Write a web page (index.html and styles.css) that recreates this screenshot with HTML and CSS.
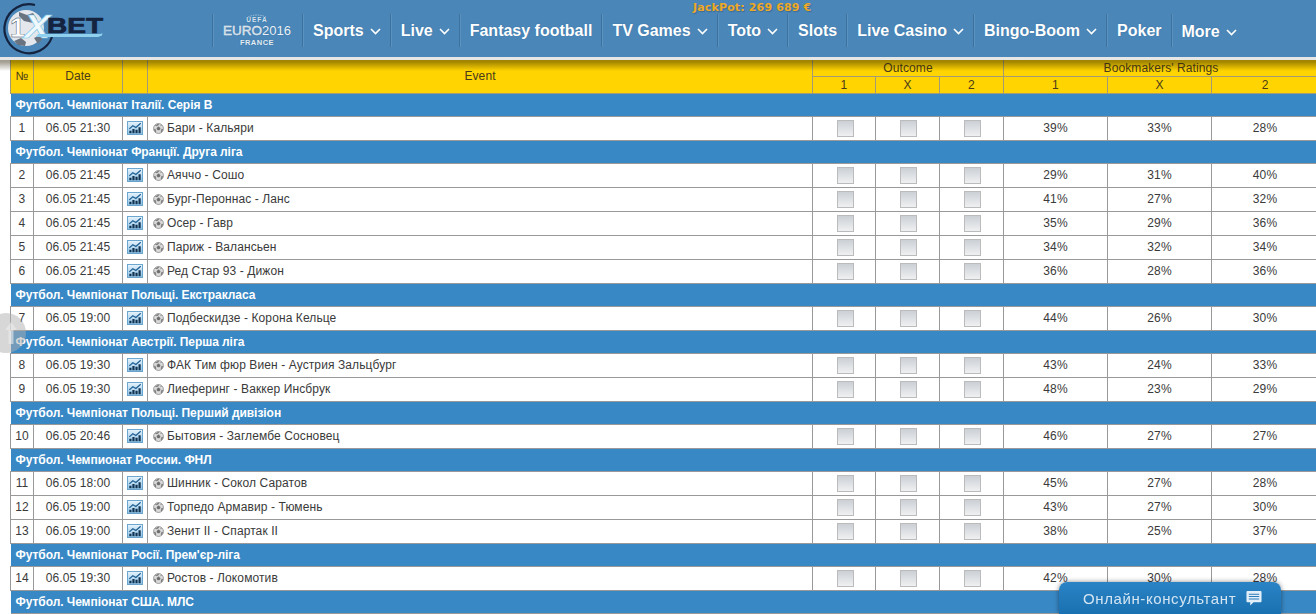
FILE: index.html
```html
<!DOCTYPE html>
<html lang="uk">
<head>
<meta charset="utf-8">
<title>1xBet</title>
<link rel="stylesheet" href="styles.css">
</head>
<body>
<svg class="defs" width="0" height="0" aria-hidden="true">
  <defs>
    <linearGradient id="chartbg" x1="0" y1="0" x2="0" y2="1"><stop offset="0" stop-color="#e8f4fc"/><stop offset="1" stop-color="#8fc3e6"/></linearGradient>
    <symbol id="chev" viewBox="0 0 11 7"><path d="M1 1l4.500 4.500L10 1" fill="none" stroke="#fff" stroke-width="1.600"/></symbol>
    <symbol id="chart" viewBox="0 0 18 16">
      <rect x=".5" y=".5" width="17" height="15" fill="url(#chartbg)" stroke="#5b9bc9"/>
      <path d="M2.500 14v-3h2.500v3zM6 14v-5h2.500v5zM9.500 14v-4H12v4zM13 14V7h2.500v7z" fill="#123452"/>
      <path d="M2.500 9L6.500 5.500l3.500 2 5.500-5" fill="none" stroke="#1f5f92" stroke-width="1.400"/>
    </symbol>
    <symbol id="ball" viewBox="0 0 12 12">
      <circle cx="6" cy="6" r="5.400" fill="#dcdcdc" stroke="#808080" stroke-width=".8"/>
      <path d="M6 4l1.900 1.400-.7 2.200H4.800l-.7-2.200zM6 .9v1.300L4.300 3.100 2.400 2.600M9.600 2.600L7.700 3.100M1 7l1.500-.3.700 2.300-.5 1.100M11 7l-1.500-.3-.7 2.300.5 1.100" fill="#6e6e6e" stroke="#6e6e6e" stroke-width=".5"/>
    </symbol>
  </defs>
</svg>
<header class="top">
  <a class="logo" href="#" aria-label="1xBet">
    <svg width="110" height="57" viewBox="0 0 110 57">
      <circle cx="26" cy="28" r="18" fill="#e4e8ec"/>
      <path d="M19 12l8 3 6-2 4 6-4 4-9-2-5-5zM14 41l7-3 5 4-1 4-7-1zM34 38l6-3 3 3-5 6z" fill="#6a7480"/>
      <path d="M35 5A24.500 24.500 0 1 0 52 37" fill="none" stroke="#14233f" stroke-width="2.200"/>
      <text x="10" y="37" class="logo-one">1</text>
      <text x="24" y="38" class="logo-x" textLength="26" lengthAdjust="spacingAndGlyphs">X</text>
      <text x="47" y="33" class="logo-bet" textLength="56" lengthAdjust="spacingAndGlyphs">BET</text>
      <path d="M38 34h62l2.500-.8-.5 2.300-4 1.500H36z" fill="#8fd0ee"/>
    </svg>
  </a>
  <div class="top-main">
    <div class="jackpot">JackPot: 269 689 €</div>
    <nav class="nav">
      <a class="nav-item euro" href="#">
        <svg width="68" height="34" viewBox="0 0 68 34">
          <text x="34" y="8" class="euro-uefa">UEFA</text>
          <path d="M25 3q9-4 18 0" fill="none" stroke="#c7dbea" stroke-width=".7" stroke-dasharray="1.500 1"/>
          <text x="0" y="21" class="euro-main" textLength="39" lengthAdjust="spacingAndGlyphs">EURO</text>
          <text x="39" y="21" class="euro-year" textLength="29" lengthAdjust="spacingAndGlyphs">2016</text>
          <text x="34" y="31" class="euro-fr">FRANCE</text>
        </svg>
      </a>
      <a class="nav-item" href="#">Sports<svg class="chev"><use href="#chev"/></svg></a>
      <a class="nav-item" href="#">Live<svg class="chev"><use href="#chev"/></svg></a>
      <a class="nav-item" href="#">Fantasy football</a>
      <a class="nav-item" href="#">TV Games<svg class="chev"><use href="#chev"/></svg></a>
      <a class="nav-item" href="#">Toto<svg class="chev"><use href="#chev"/></svg></a>
      <a class="nav-item" href="#">Slots</a>
      <a class="nav-item" href="#">Live Casino<svg class="chev"><use href="#chev"/></svg></a>
      <a class="nav-item" href="#">Bingo-Boom<svg class="chev"><use href="#chev"/></svg></a>
      <a class="nav-item" href="#">Poker</a>
      <a class="nav-item more" href="#">More<svg class="chev"><use href="#chev"/></svg></a>
    </nav>
  </div>
</header>
<main class="content">
<table class="grid">
  <colgroup>
    <col class="c-num"><col class="c-date"><col class="c-ic"><col class="c-event">
    <col class="c-o1"><col class="c-o2"><col class="c-o2">
    <col class="c-r"><col class="c-r"><col class="c-r3">
  </colgroup>
  <thead>
    <tr>
      <th class="tall" rowspan="2">№</th><th class="tall" rowspan="2">Date</th><th class="tall" rowspan="2"></th><th class="tall" rowspan="2">Event</th>
      <th colspan="3">Outcome</th><th colspan="3">Bookmakers' Ratings</th>
    </tr>
    <tr><th>1</th><th>X</th><th>2</th><th>1</th><th>X</th><th>2</th></tr>
  </thead>
  <tbody id="rows">
    <tr class="group"><td colspan="10">Футбол. Чемпіонат Італії. Серія B</td></tr>
    <tr class="row"><td>1</td><td>06.05 21:30</td><td class="ic"><svg class="chart"><use href="#chart"/></svg></td><td class="ev"><svg class="ball"><use href="#ball"/></svg>Бари - Кальяри</td><td><i class="cb"></i></td><td><i class="cb"></i></td><td><i class="cb"></i></td><td>39%</td><td>33%</td><td>28%</td></tr>
    <tr class="group"><td colspan="10">Футбол. Чемпіонат Франції. Друга ліга</td></tr>
    <tr class="row"><td>2</td><td>06.05 21:45</td><td class="ic"><svg class="chart"><use href="#chart"/></svg></td><td class="ev"><svg class="ball"><use href="#ball"/></svg>Аяччо - Сошо</td><td><i class="cb"></i></td><td><i class="cb"></i></td><td><i class="cb"></i></td><td>29%</td><td>31%</td><td>40%</td></tr>
    <tr class="row"><td>3</td><td>06.05 21:45</td><td class="ic"><svg class="chart"><use href="#chart"/></svg></td><td class="ev"><svg class="ball"><use href="#ball"/></svg>Бург-Пероннас - Ланс</td><td><i class="cb"></i></td><td><i class="cb"></i></td><td><i class="cb"></i></td><td>41%</td><td>27%</td><td>32%</td></tr>
    <tr class="row"><td>4</td><td>06.05 21:45</td><td class="ic"><svg class="chart"><use href="#chart"/></svg></td><td class="ev"><svg class="ball"><use href="#ball"/></svg>Осер - Гавр</td><td><i class="cb"></i></td><td><i class="cb"></i></td><td><i class="cb"></i></td><td>35%</td><td>29%</td><td>36%</td></tr>
    <tr class="row"><td>5</td><td>06.05 21:45</td><td class="ic"><svg class="chart"><use href="#chart"/></svg></td><td class="ev"><svg class="ball"><use href="#ball"/></svg>Париж - Валансьен</td><td><i class="cb"></i></td><td><i class="cb"></i></td><td><i class="cb"></i></td><td>34%</td><td>32%</td><td>34%</td></tr>
    <tr class="row"><td>6</td><td>06.05 21:45</td><td class="ic"><svg class="chart"><use href="#chart"/></svg></td><td class="ev"><svg class="ball"><use href="#ball"/></svg>Ред Стар 93 - Дижон</td><td><i class="cb"></i></td><td><i class="cb"></i></td><td><i class="cb"></i></td><td>36%</td><td>28%</td><td>36%</td></tr>
    <tr class="group"><td colspan="10">Футбол. Чемпіонат Польщі. Екстракласа</td></tr>
    <tr class="row"><td>7</td><td>06.05 19:00</td><td class="ic"><svg class="chart"><use href="#chart"/></svg></td><td class="ev"><svg class="ball"><use href="#ball"/></svg>Подбескидзе - Корона Кельце</td><td><i class="cb"></i></td><td><i class="cb"></i></td><td><i class="cb"></i></td><td>44%</td><td>26%</td><td>30%</td></tr>
    <tr class="group"><td colspan="10">Футбол. Чемпіонат Австрії. Перша ліга</td></tr>
    <tr class="row"><td>8</td><td>06.05 19:30</td><td class="ic"><svg class="chart"><use href="#chart"/></svg></td><td class="ev"><svg class="ball"><use href="#ball"/></svg>ФАК Тим фюр Виен - Аустрия Зальцбург</td><td><i class="cb"></i></td><td><i class="cb"></i></td><td><i class="cb"></i></td><td>43%</td><td>24%</td><td>33%</td></tr>
    <tr class="row"><td>9</td><td>06.05 19:30</td><td class="ic"><svg class="chart"><use href="#chart"/></svg></td><td class="ev"><svg class="ball"><use href="#ball"/></svg>Лиеферинг - Ваккер Инсбрук</td><td><i class="cb"></i></td><td><i class="cb"></i></td><td><i class="cb"></i></td><td>48%</td><td>23%</td><td>29%</td></tr>
    <tr class="group"><td colspan="10">Футбол. Чемпіонат Польщі. Перший дивізіон</td></tr>
    <tr class="row"><td>10</td><td>06.05 20:46</td><td class="ic"><svg class="chart"><use href="#chart"/></svg></td><td class="ev"><svg class="ball"><use href="#ball"/></svg>Бытовия - Заглембе Сосновец</td><td><i class="cb"></i></td><td><i class="cb"></i></td><td><i class="cb"></i></td><td>46%</td><td>27%</td><td>27%</td></tr>
    <tr class="group"><td colspan="10">Футбол. Чемпионат России. ФНЛ</td></tr>
    <tr class="row"><td>11</td><td>06.05 18:00</td><td class="ic"><svg class="chart"><use href="#chart"/></svg></td><td class="ev"><svg class="ball"><use href="#ball"/></svg>Шинник - Сокол Саратов</td><td><i class="cb"></i></td><td><i class="cb"></i></td><td><i class="cb"></i></td><td>45%</td><td>27%</td><td>28%</td></tr>
    <tr class="row"><td>12</td><td>06.05 19:00</td><td class="ic"><svg class="chart"><use href="#chart"/></svg></td><td class="ev"><svg class="ball"><use href="#ball"/></svg>Торпедо Армавир - Тюмень</td><td><i class="cb"></i></td><td><i class="cb"></i></td><td><i class="cb"></i></td><td>43%</td><td>27%</td><td>30%</td></tr>
    <tr class="row"><td>13</td><td>06.05 19:00</td><td class="ic"><svg class="chart"><use href="#chart"/></svg></td><td class="ev"><svg class="ball"><use href="#ball"/></svg>Зенит II - Спартак II</td><td><i class="cb"></i></td><td><i class="cb"></i></td><td><i class="cb"></i></td><td>38%</td><td>25%</td><td>37%</td></tr>
    <tr class="group"><td colspan="10">Футбол. Чемпіонат Росії. Прем'єр-ліга</td></tr>
    <tr class="row"><td>14</td><td>06.05 19:30</td><td class="ic"><svg class="chart"><use href="#chart"/></svg></td><td class="ev"><svg class="ball"><use href="#ball"/></svg>Ростов - Локомотив</td><td><i class="cb"></i></td><td><i class="cb"></i></td><td><i class="cb"></i></td><td>42%</td><td>30%</td><td>28%</td></tr>
    <tr class="group"><td colspan="10">Футбол. Чемпіонат США. МЛС</td></tr>
  </tbody>
</table>
</main>
<a class="to-top" href="#" aria-label="Up">
  <svg width="12" height="22" viewBox="0 0 12 22"><path d="M6 0l6 8H8.500v14h-5V8H0z" fill="#ececec" fill-opacity=".6"/></svg>
</a>
<div class="chat">
  <span>Онлайн-консультант</span>
  <svg width="18" height="16" viewBox="0 0 17 17"><path d="M1.500 1h14a1 1 0 0 1 1 1v10a1 1 0 0 1-1 1H8l-3.500 3.500V13h-3a1 1 0 0 1-1-1V2a1 1 0 0 1 1-1z" fill="#e3eff8"/><path d="M3 4.500h11M3 7h11M3 9.500h11" stroke="#2a7cb9" stroke-width="1.100"/></svg>
</div>
</body>
</html>
```
FILE: styles.css
```css
* { box-sizing: border-box; }
html, body { margin: 0; height: 614px; overflow: hidden; background: #fff; }
body { font: 12px "Liberation Sans", Arial, sans-serif; color: #3a3a3a; }
a { color: inherit; text-decoration: none; }
.defs { display: block; height: 0; }

.top {
  position: relative;
  z-index: 2;
  display: flex;
  height: 60px;
  background: #4a86b8;
  border-bottom: 3px solid #e6e6e6;
}
.logo { display: block; width: 212px; flex: none; height: 57px; }
.logo svg { display: block; }
.logo-one { font: bold 27px "Liberation Sans", sans-serif; fill: #fff; stroke: #26364f; stroke-width: .4; }
.logo-x { font: italic bold 34px "Liberation Sans", sans-serif; fill: #eef8fd; stroke: #7cc6e8; stroke-width: .6; }
.logo-bet { font: bold 22px "Liberation Sans", sans-serif; fill: #14233f; stroke: #14233f; stroke-width: .7; }

.top-main { flex: 1; min-width: 0; }
.jackpot {
  height: 14px;
  padding-left: 481px;
  font: bold 11px/15px "DejaVu Sans", Verdana, sans-serif;
  letter-spacing: .15px;
  color: #eea926;
  text-shadow: 1px 1px 1px #3e6a90;
  white-space: nowrap;
}
.nav { display: flex; height: 33px; }
.nav-item {
  display: flex;
  align-items: center;
  padding: 1px 9px 0 10px;
  border-left: 1px solid #3c729f;
  box-shadow: inset 1px 0 0 #5b93c0;
  font: bold 16px "Liberation Sans", Arial, sans-serif;
  color: #fff;
  white-space: nowrap;
  text-shadow: 0 0 1px #2f6a9a;
}
.nav-item.more { padding-top: 3px; }
.euro { width: 90px; padding: 0 0 0 10px; }
.chev { width: 11px; height: 7px; margin-left: 6px; }
.euro-uefa { font: bold 6.500px "Liberation Sans", sans-serif; fill: #d8e6f1; text-anchor: middle; letter-spacing: 1px; }
.euro-main { font: 13px "Liberation Sans", sans-serif; fill: #fff; stroke: #fff; stroke-width: .35; }
.euro-year { font: 13px "Liberation Sans", sans-serif; fill: #eaf2f8; }
.euro-fr { font: bold 7.500px "Liberation Sans", sans-serif; fill: #e3edf5; text-anchor: middle; letter-spacing: .5px; }

.content { position: relative; padding-left: 10px; }
.content::before {
  content: "";
  position: absolute;
  z-index: 1;
  left: 0;
  right: 0;
  top: 0;
  height: 12px;
  background: linear-gradient(rgba(40,30,0,.45), rgba(40,30,0,.42) 25%, rgba(40,30,0,0));
  pointer-events: none;
}
.grid { width: 1308px; margin-top: -1px; table-layout: fixed; border-collapse: collapse; }
.c-num { width: 23px; }
.c-date { width: 89px; }
.c-ic { width: 25px; }
.c-event { width: 665px; }
.c-o1 { width: 63px; }
.c-o2 { width: 64px; }
.c-r { width: 104px; }
.c-r3 { width: 107px; }

.grid th {
  height: 17px;
  padding: 0;
  background: #ffd400;
  border: 1px solid #a39a78;
  font-weight: normal;
  line-height: 14px;
  letter-spacing: .1px;
  text-align: center;
  color: #4a3a1a;
}
.grid th.tall { padding-bottom: 2px; }
.grid td {
  padding: 0 0 1px;
  border: 1px solid #999;
  letter-spacing: .1px;
  text-align: center;
  white-space: nowrap;
}
.row { height: 24px; }
.group { height: 23px; }
.grid .group td {
  padding: 0 0 0 5px;
  background: #3888c5;
  border-left: 0;
  border-right: 0;
  font-weight: bold;
  letter-spacing: -.05px;
  text-align: left;
  color: #fff;
}
.grid .ev { padding-left: 5px; text-align: left; }
.ic { line-height: 0; }
.chart { width: 16px; height: 14px; vertical-align: middle; }
.ball { width: 11px; height: 11px; margin-right: 3px; vertical-align: -2px; }
.cb {
  display: block;
  width: 17px;
  height: 17px;
  margin: 0 auto;
  position: relative;
  left: 1px;
  border: 1px solid #bbb;
  background: linear-gradient(#cbd0d6, #eff0f1);
}

.to-top {
  position: fixed;
  z-index: 3;
  left: -14px;
  top: 313px;
  width: 40px;
  height: 40px;
  display: flex;
  align-items: center;
  justify-content: flex-end;
  padding-right: 9px;
  border-radius: 50%;
  background: rgba(175,175,175,.5);
}
.chat {
  position: fixed;
  z-index: 3;
  left: 1059px;
  top: 582px;
  width: 222px;
  height: 32px;
  display: flex;
  align-items: center;
  gap: 9px;
  padding: 0 0 0 24px;
  border-radius: 8px 8px 0 0;
  background: linear-gradient(#2a83c4, #1a71b2);
  box-shadow: 0 0 5px rgba(0,0,0,.45);
  font: 15px "Liberation Sans", Arial, sans-serif;
  letter-spacing: .6px;
  color: #d3e5f3;
  white-space: nowrap;
}
```
